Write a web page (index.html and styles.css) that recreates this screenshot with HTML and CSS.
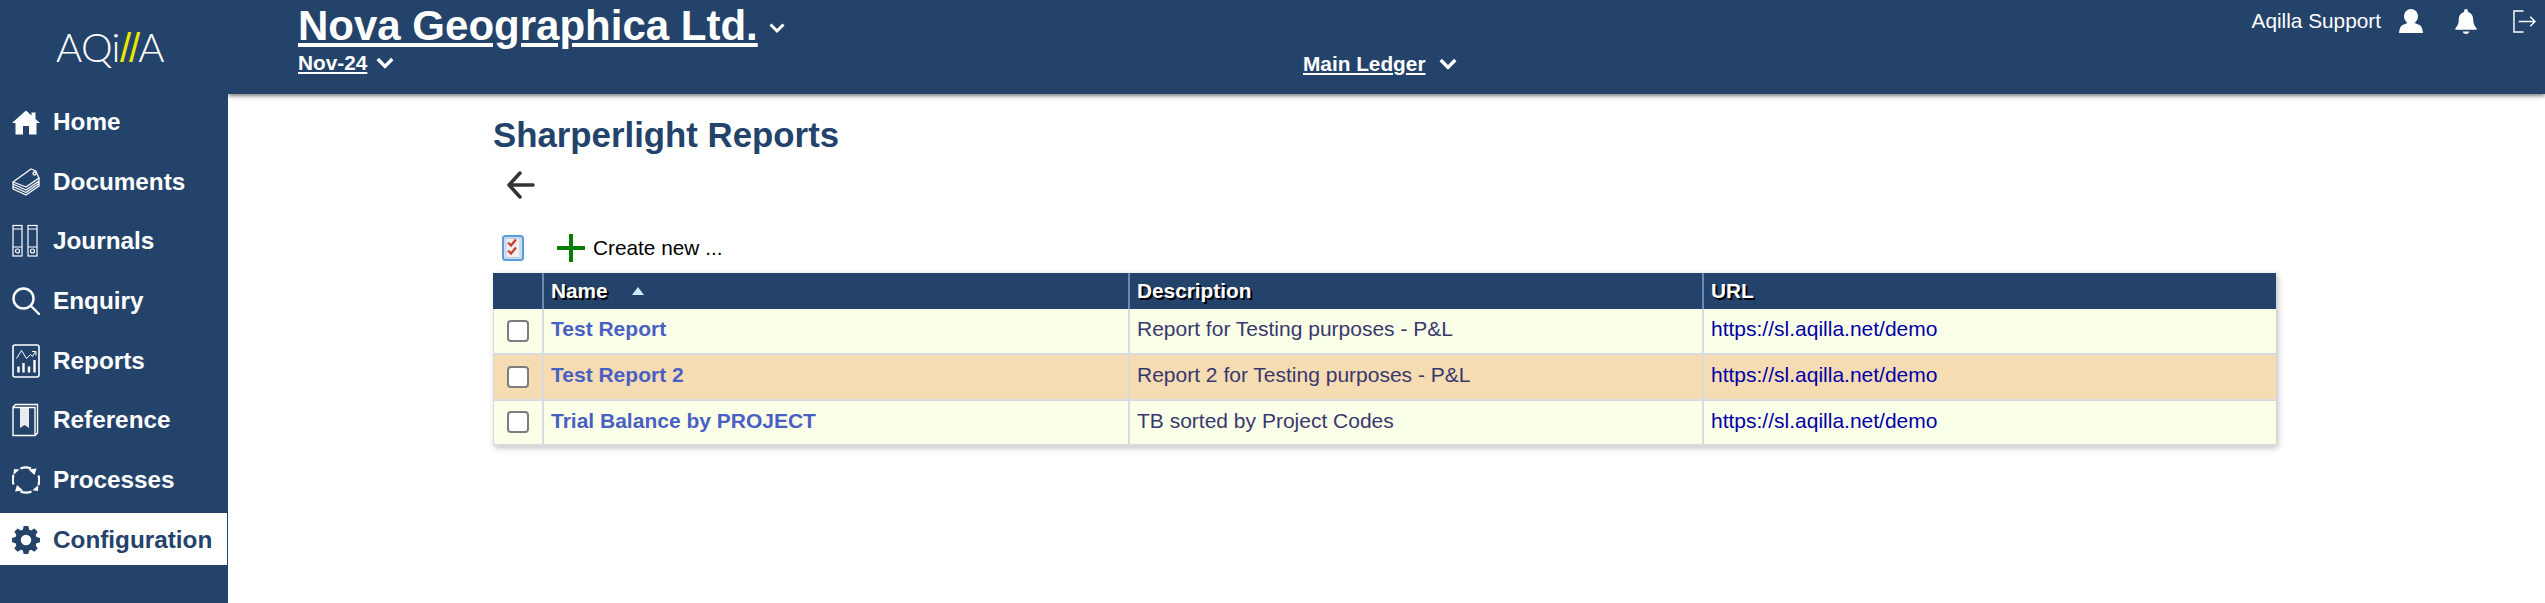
FILE: index.html
```html
<!DOCTYPE html>
<html lang="en">
<head>
<meta charset="utf-8">
<title>Sharperlight Reports</title>
<link rel="stylesheet" href="styles.css">
</head>
<body>
<div class="shell">
  <aside class="sidebar">
    <div class="logo">AQi<span class="logo-slash">//</span>A</div>
    <nav class="nav">
      <a class="nav-item"><svg class="nav-icon" viewBox="0 0 28 28"><path fill="currentColor" d="M14 2.500 0 15h3.500v11.500H11V18h6v8.500h7.500V15H28l-4.500-4V4.500H19.500v3z"/></svg>Home</a>
      <a class="nav-item"><svg class="nav-icon" viewBox="0 0 28 28" fill="none" stroke="currentColor" stroke-width="1.300" stroke-linejoin="round"><path d="M1 14 19 1l5 2 1 3 2 4-13 9z"/><path d="M1 14v2l13 6 13-9v-3M1 16.500v2l13 6 13-9M1 19v2l13 6 13-9v-6"/><circle cx="22.500" cy="5.500" r="1.500"/></svg>Documents</a>
      <a class="nav-item"><svg class="nav-icon nav-icon-tall" viewBox="0 0 28 34" fill="none" stroke="currentColor" stroke-width="1.200"><rect x="1" y="1.500" width="9" height="30.500"/><rect x="16" y="1.500" width="9" height="30.500"/><path d="M1 5h9M16 5h9M1 23h9M16 23h9"/><circle cx="5.500" cy="27" r="2"/><circle cx="20.500" cy="27" r="2"/></svg>Journals</a>
      <a class="nav-item"><svg class="nav-icon" viewBox="0 0 28 28" fill="none" stroke="currentColor" stroke-width="2.400" stroke-linecap="round"><circle cx="11.500" cy="11.500" r="10"/><path d="M19 19l8 8"/></svg>Enquiry</a>
      <a class="nav-item"><svg class="nav-icon nav-icon-tall" viewBox="0 0 28 34" fill="none" stroke="currentColor"><rect x="1" y="1" width="26" height="32" rx="2" stroke-width="1.600"/><path d="M4.500 14.500 9.500 6.500l5 8 4-4 2 2 3-5M20 7.500h4v4" stroke-width="1"/><path d="M6.500 28.500v-6M11.500 28.500V19M17 28.500v-6M22.500 28.500V16" stroke-width="2.400"/></svg>Reports</a>
      <a class="nav-item"><svg class="nav-icon nav-icon-tall" viewBox="0 0 28 34" fill="none" stroke="currentColor" stroke-width="1.400"><path d="M1 32V4L3.500 1.500H25.500V30l-2.500 2.500H1zM1 4.500H23V32.500"/><path fill="#e9ebf0" stroke="none" d="M8 5h9v20l-4.500-3-4.500 3z"/></svg>Reference</a>
      <a class="nav-item"><svg class="nav-icon" viewBox="0 0 28 28" fill="none" stroke="currentColor" stroke-width="2.200"><path d="M8.500 2.500C12 1 15.500 1 19 2.500M26.500 9.500C27.500 13 27.500 15.500 26.500 19M19.500 25.500C16 27 12 27 8.500 25.500M1.500 18.500C.5 15 .5 12 1.500 9"/><path fill="currentColor" stroke="none" d="M24.500 2.500 16.500 3.500l6 5.500zM3 25.500 11 24.500l-6-5.500zM26 25l-5.500-.8 5.800-5.200zM2 3l5.500.5L1.300 9z"/></svg>Processes</a>
      <a class="nav-item nav-item-active"><svg class="nav-icon" viewBox="0 0 24 24"><path fill="currentColor" fill-rule="evenodd" d="M10 0h4l.7 3.200 1.700.7L19.200 2.200 22 5l-1.700 2.800.7 1.700L24 10.200v3.800l-3 .7-.7 1.700 1.700 2.800-2.800 2.800-2.800-1.700-1.700.7L14 24h-4l-.7-3-1.700-.7-2.800 1.700L2 19.200l1.700-2.800-.7-1.700L0 14v-3.800l3-.7.7-1.700L2 5l2.800-2.800 2.800 1.700 1.700-.7zM12 7.500a4.500 4.500 0 1 0 0 9 4.500 4.500 0 0 0 0-9z"/></svg>Configuration</a>
    </nav>
  </aside>
  <div class="content">
    <header class="topbar">
      <div class="org">
        <div class="org-row"><a class="org-name">Nova Geographica Ltd.</a><svg class="chevron chevron-org" viewBox="0 0 16 12"><path d="M1.500 2.500 8 9l6.500-6.500"/></svg></div>
        <div class="period-row"><a class="link-strong">Nov-24</a><svg class="chevron" viewBox="0 0 16 12"><path d="M1.500 2.500 8 9l6.500-6.500"/></svg></div>
      </div>
      <div class="ledger"><a class="link-strong">Main Ledger</a><svg class="chevron" viewBox="0 0 16 12"><path d="M1.500 2.500 8 9l6.500-6.500"/></svg></div>
      <div class="user">
        <span class="user-name">Aqilla Support</span>
        <svg class="user-icon" viewBox="0 0 24 24"><path fill="currentColor" d="M12 0a7 7 0 0 1 7 7c0 3-1.500 5.500-3.500 7l5 2c2 1 3 3.500 3.500 8H0c.5-4.500 1.500-7 3.500-8l5-2C6.500 12.500 5 10 5 7a7 7 0 0 1 7-7z"/></svg>
        <svg class="bell-icon" viewBox="0 0 22 26"><path fill="currentColor" d="M11 0c1.200 0 2 .8 2 2v1c4 1 5.500 4.500 5.500 8 0 4 1 6 3.500 9v1.500H0V20c2.500-3 3.500-5 3.500-9 0-3.500 1.500-7 5.500-8V2c0-1.200.8-2 2-2zM7.500 23.500h7A3.500 3 0 0 1 11 26a3.500 3 0 0 1-3.500-2.500z"/></svg>
        <svg class="logout-icon" viewBox="0 0 24 24" fill="none" stroke="currentColor" stroke-width="1.500"><path d="M11 1H1v22h10"/><path d="M6 12h17M18 7l5 5-5 5"/></svg>
      </div>
    </header>
    <main class="main">
      <h1 class="page-title">Sharperlight Reports</h1>
      <div class="back-row"><svg class="back-icon" viewBox="0 0 28 28" fill="none" stroke="#333" stroke-width="3.500" stroke-linecap="round" stroke-linejoin="round"><path d="M26 14H2M13 2 2 14l11 12"/></svg></div>
      <div class="toolbar">
        <svg class="check-icon" viewBox="0 0 22 26"><rect x="1" y="1" width="20" height="24" rx="2.500" fill="#cfe3f7" stroke="#5a9bdc" stroke-width="2"/><rect x="4" y="3.500" width="14" height="19" fill="#f1f1ee" stroke="#b9c4d0" stroke-width=".8"/><path d="M6 7.500l3 3 5-6M6 15.500l3 3 5-6" fill="none" stroke="#cc3a3a" stroke-width="2.200"/></svg>
        <a class="create"><svg class="plus-icon" viewBox="0 0 28 28"><path fill="#008000" d="M12 0h4v12h12v4H16v12h-4V16H0v-4h12z"/></svg>Create new ...</a>
      </div>
      <table class="grid">
        <colgroup><col class="col-check"><col class="col-name"><col class="col-desc"><col class="col-url"></colgroup>
        <thead>
          <tr><th></th><th><span class="sort-head">Name<span class="sort-arrow"></span></span></th><th>Description</th><th>URL</th></tr>
        </thead>
        <tbody>
          <tr><td class="cell-check"><input class="check" type="checkbox"></td><td><a class="report-link">Test Report</a></td><td class="cell-desc">Report for Testing purposes - P&amp;L</td><td class="cell-url">https://sl.aqilla.net/demo</td></tr>
          <tr class="row-alt"><td class="cell-check"><input class="check" type="checkbox"></td><td><a class="report-link">Test Report 2</a></td><td class="cell-desc">Report 2 for Testing purposes - P&amp;L</td><td class="cell-url">https://sl.aqilla.net/demo</td></tr>
          <tr><td class="cell-check"><input class="check" type="checkbox"></td><td><a class="report-link">Trial Balance by PROJECT</a></td><td class="cell-desc">TB sorted by Project Codes</td><td class="cell-url">https://sl.aqilla.net/demo</td></tr>
        </tbody>
      </table>
    </main>
  </div>
</div>
</body>
</html>
```
FILE: styles.css
```css
* { box-sizing: border-box; }
html, body { margin: 0; height: 100%; }
body {
  font-family: "Liberation Sans", Arial, sans-serif;
  font-size: 20.8px;
  color: #000;
  background: #fff;
  overflow: hidden;
}
.shell { display: flex; height: 100vh; }

.sidebar {
  width: 228px;
  flex: none;
  background: #24436b;
  color: #fff;
  position: relative;
  z-index: 2;
}
.logo {
  height: 95px;
  padding: 23px 0 0 56px;
  font-family: Lato, "Liberation Sans", sans-serif;
  font-weight: 300;
  font-size: 40px;
  line-height: 48px;
  letter-spacing: -.6px;
}
.logo-slash {
  color: #e8e800;
  font-family: "Liberation Sans", Arial, sans-serif;
  font-weight: 400;
  letter-spacing: -2px;
}
.nav { display: flex; flex-direction: column; gap: 7.7px; }
.nav-item {
  display: flex;
  align-items: center;
  gap: 13px;
  height: 52px;
  padding: 2px 0 0 12px;
  font-size: 24.3px;
  font-weight: 700;
}
.nav-icon { width: 28px; height: 28px; flex: none; }
.nav-icon-tall { height: 34px; }
.nav-item-active {
  width: 227px;
  background: #fff;
  color: #24436b;
}

.content { flex: 1; display: flex; flex-direction: column; min-width: 0; }
.topbar {
  height: 94px;
  flex: none;
  background: #24436b;
  color: #fff;
  display: flex;
  padding-left: 70px;
  position: relative;
  box-shadow: 0 2px 4px rgba(0, 0, 0, .5);
}
.org { width: 1005px; flex: none; }
.org-row { display: flex; align-items: center; gap: 11px; height: 50px; padding-top: 2px; }
.org-name {
  font-size: 42px;
  line-height: 48px;
  font-weight: 700;
  text-decoration: underline;
}
.chevron {
  width: 18px;
  height: 14px;
  fill: none;
  stroke: #fff;
  stroke-width: 3;
}
.chevron-org { width: 16px; height: 12px; margin-top: 4px; }
.period-row, .ledger { display: flex; align-items: center; gap: 9px; }
.period-row { margin-top: 1px; }
.ledger { height: 30px; margin-top: 49px; gap: 13px; }
.link-strong { font-weight: 700; text-decoration: underline; }
.user {
  margin-left: auto;
  display: flex;
  align-items: center;
  height: 42px;
  padding-right: 9px;
}
.user-name { margin-right: 18px; }
.user-icon { width: 24px; height: 24px; margin-right: 32px; }
.bell-icon { width: 22px; height: 25px; margin-right: 36px; }
.logout-icon { width: 23px; height: 23px; }

.main { flex: 1; padding: 20px 0 0 265px; }
.page-title {
  margin: 0;
  font-size: 34.8px;
  line-height: 42px;
  font-weight: 700;
  color: #24436b;
}
.back-row { height: 47px; padding: 15px 0 0 14px; }
.back-icon { width: 28px; height: 28px; display: block; }
.toolbar { display: flex; align-items: center; height: 30px; margin-top: 30px; padding-left: 9px; }
.check-icon { width: 22px; height: 26px; }
.create { display: flex; align-items: center; gap: 8px; margin-left: 33px; }
.plus-icon { width: 28px; height: 28px; }

.grid {
  width: 1783px;
  margin-top: 10px;
  font-size: 21px;
  table-layout: fixed;
  border-collapse: separate;
  border-spacing: 0;
  box-shadow: 2px 2px 6px rgba(0, 0, 0, .25);
}
.col-check { width: 49px; }
.col-name { width: 586px; }
.col-desc { width: 574px; }
.col-url { width: 574px; }
.grid th {
  height: 36px;
  padding: 0 0 0 7px;
  background: #24436b;
  color: #fff;
  font-size: 20.8px;
  font-weight: 700;
  text-align: left;
  text-shadow: 2px 2px 0 #000;
  border-left: 2px solid #6f87b3;
}
.grid th:first-child { border-left: 0; }
.grid td {
  height: 46px;
  padding: 0 0 4px 7px;
  background: #faffe8;
  border: 0 solid #d9dbe0;
  border-width: 0 0 2px 2px;
  vertical-align: middle;
}
.grid tr:last-child td { height: 45px; }
.grid td:first-child { border-left-width: 1px; }
.grid .row-alt td { background: #f5dcb3; }
.grid .cell-check { padding: 0 0 1px 13px; }
.check {
  appearance: none;
  display: block;
  width: 22px;
  height: 22px;
  margin: 0;
  background: #fff;
  border: 2px solid #7d7d7d;
  border-radius: 4px;
}
.sort-head { display: inline-flex; align-items: center; }
.sort-arrow {
  width: 0;
  height: 0;
  margin-left: 24px;
  border: 6px solid transparent;
  border-top: 0;
  border-bottom: 8px solid #cdeafa;
}
.report-link { color: #4a5fc4; font-weight: 700; }
.cell-desc { color: #39386e; }
.cell-url { color: #0000a8; }
```
